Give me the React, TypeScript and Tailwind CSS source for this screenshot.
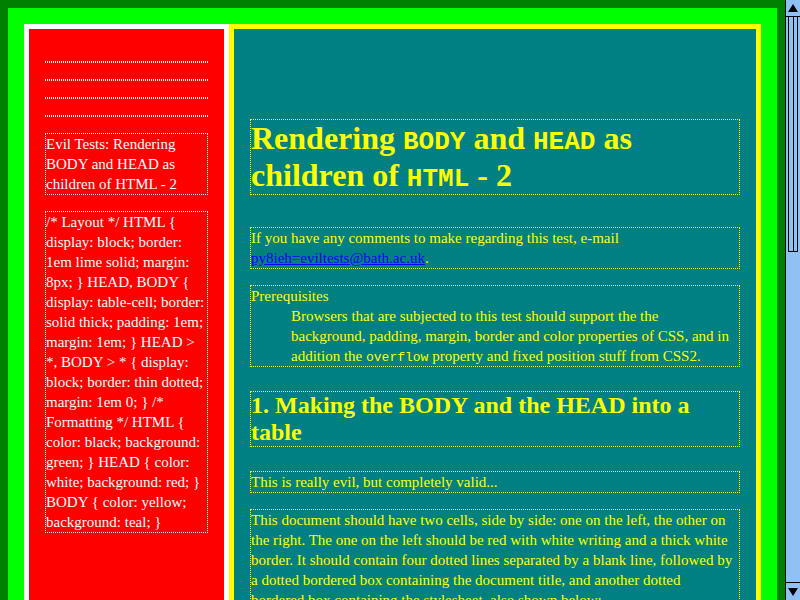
const serif = { fontFamily: '"Liberation Serif", "Times New Roman", serif' };

const headLines = [
  '/* Layout */ HTML {',
  'display: block; border:',
  '1em lime solid; margin:',
  '8px; } HEAD, BODY {',
  'display: table-cell; border:',
  'solid thick; padding: 1em;',
  'margin: 1em; } HEAD >',
  '*, BODY > * { display:',
  'block; border: thin dotted;',
  'margin: 1em 0; } /*',
  'Formatting */ HTML {',
  'color: black; background:',
  'green; } HEAD { color:',
  'white; background: red; }',
  'BODY { color: yellow;',
  'background: teal; }',
];

const lastPara = [
  'This document should have two cells, side by side: one on the left, the other on',
  'the right. The one on the left should be red with white writing and a thick white',
  'border. It should contain four dotted lines separated by a blank line, followed by',
  'a dotted bordered box containing the document title, and another dotted',
  'bordered box containing the stylesheet, also shown below:',
];

function Lines({ lines }: { lines: string[] }) {
  return (
    <>
      {lines.map((l, i) => (
        <span key={i} className="block whitespace-nowrap">
          {l}
        </span>
      ))}
    </>
  );
}

function Code({ children, size }: { children: string; size: string }) {
  return <code className={`font-['Liberation_Mono',monospace] leading-none ${size}`}>{children}</code>;
}

function Scrollbar() {
  return (
    <div className="w-[15px] h-[600px] shrink-0 bg-[#90c0f4] border-l border-black flex flex-col">
      {/* up button */}
      <div className="h-[17px] border-b border-black flex items-center justify-center">
        <div className="w-0 h-0 border-l-[5px] border-r-[5px] border-b-[8px] border-l-transparent border-r-transparent border-b-black" />
      </div>
      {/* thumb */}
      <div className="mx-[2px] h-[235px] border-x border-b border-black flex justify-center">
        <div className="w-px bg-black" />
      </div>
      <div className="flex-1" />
      {/* down button */}
      <div className="h-[18px] border-t border-black flex items-center justify-center">
        <div className="w-0 h-0 border-l-[5px] border-r-[5px] border-t-[8px] border-l-transparent border-r-transparent border-t-black" />
      </div>
    </div>
  );
}

export default function App() {
  return (
    <div className="w-[800px] h-[600px] overflow-hidden flex bg-[#008000]" style={serif}>
      <div className="flex-1 min-w-0 overflow-hidden pt-[8px] px-[8px]">
        <div className="h-[700px] border-[16px] border-b-0 border-[#00ff00] flex items-stretch">
          {/* HEAD cell */}
          <div className="w-[205px] shrink-0 border-[5px] border-white bg-[#ff0000] text-white px-4 pt-4 text-[15px] leading-[20px]">
            <div className="mt-4 border-y border-dotted border-white" />
            <div className="mt-4 border-y border-dotted border-white" />
            <div className="mt-4 border-y border-dotted border-white" />
            <div className="mt-4 border-y border-dotted border-white" />
            <div className="mt-4 border border-dotted border-white">
              Evil Tests: Rendering
              <br />
              BODY and HEAD as
              <br />
              children of HTML - 2
            </div>
            <div className="mt-4 border border-dotted border-white">
              <Lines lines={headLines} />
            </div>
          </div>

          {/* BODY cell */}
          <div className="flex-1 min-w-0 overflow-hidden border-[5px] border-[#ffff00] bg-[#008080] text-[#ffff00] px-4 pt-[90px] text-[15px] leading-[20px]">
            <h1 className="border border-dotted border-[#ffff00] text-[32px] leading-[37px] font-bold">
              Rendering <Code size="text-[26px]">BODY</Code> and <Code size="text-[26px]">HEAD</Code> as
              <br />
              children of <Code size="text-[26px]">HTML</Code> - 2
            </h1>
            <p className="mt-8 border border-dotted border-[#ffff00]">
              If you have any comments to make regarding this test, e-mail
              <br />
              <a href="#" className="text-[#0000ff] underline">
                py8ieh=eviltests@bath.ac.uk
              </a>
              .
            </p>
            <dl className="mt-4 border border-dotted border-[#ffff00]">
              <dt>Prerequisites</dt>
              <dd className="ml-10">
                Browsers that are subjected to this test should support the the
                <br />
                background, padding, margin, border and color properties of CSS, and in
                <br />
                addition the <Code size="text-[13px]">overflow</Code> property and fixed position stuff from CSS2.
              </dd>
            </dl>
            <h2 className="mt-6 border border-dotted border-[#ffff00] text-[24px] leading-[27px] font-bold">
              1. Making the BODY and the HEAD into a
              <br />
              table
            </h2>
            <p className="mt-6 border border-dotted border-[#ffff00]">This is really evil, but completely valid...</p>
            <p className="mt-4 border border-dotted border-[#ffff00]">
              <Lines lines={lastPara} />
            </p>
          </div>
        </div>
      </div>
      <Scrollbar />
    </div>
  );
}
